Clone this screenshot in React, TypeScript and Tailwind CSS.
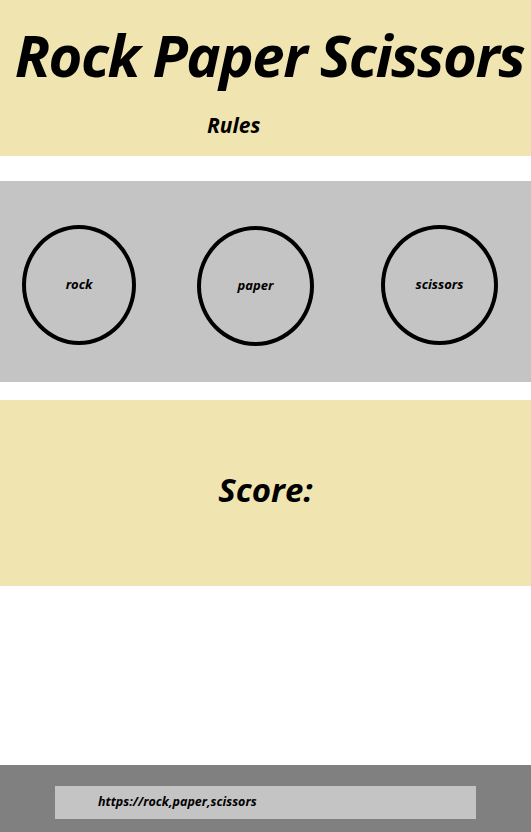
export default function App() {
  const moves = [
    { label: 'rock', cls: 'w-[114px] ml-[22px] mt-[6px]' },
    { label: 'paper', cls: 'w-[117px] ml-[61px] mt-[9px]' },
    { label: 'scissors', cls: 'w-[117px] ml-[67px] mt-[6px]' },
  ];

  return (
    <div className="w-[531px] h-[832px] flex flex-col bg-white font-['Open_Sans',sans-serif] italic font-bold text-black">
      {/* Header */}
      <header className="h-[156px] bg-[#F0E4B1] flex flex-col">
        <h1 className="mt-[19px] pl-[8px] text-center text-[58px] leading-[72px] tracking-[-1.5px] whitespace-nowrap">
          Rock Paper Scissors
        </h1>
        <div className="mt-[20px] pl-[207px] text-[21px] leading-[28px]">Rules</div>
      </header>

      {/* Choices */}
      <section className="mt-[25px] h-[201px] bg-[#C4C4C4] flex items-center">
        {moves.map((m) => (
          <div
            key={m.label}
            className={`${m.cls} h-[120px] rounded-[50%] border-[4px] border-black flex items-center justify-center text-[13px]`}
          >
            {m.label}
          </div>
        ))}
      </section>

      {/* Score */}
      <section className="mt-[18px] h-[186px] bg-[#F0E4B1] flex items-center justify-center">
        <div className="text-[33px] leading-[44px] mt-[-6px]">Score:</div>
      </section>

      <div className="flex-1" />

      {/* Footer */}
      <footer className="h-[67px] bg-[#808080] pt-[21px] pl-[55px]">
        <div className="w-[421px] h-[33px] bg-[#C4C4C4] pl-[43px] flex items-center text-[12.5px]">
          https://rock,paper,scissors
        </div>
      </footer>
    </div>
  );
}
